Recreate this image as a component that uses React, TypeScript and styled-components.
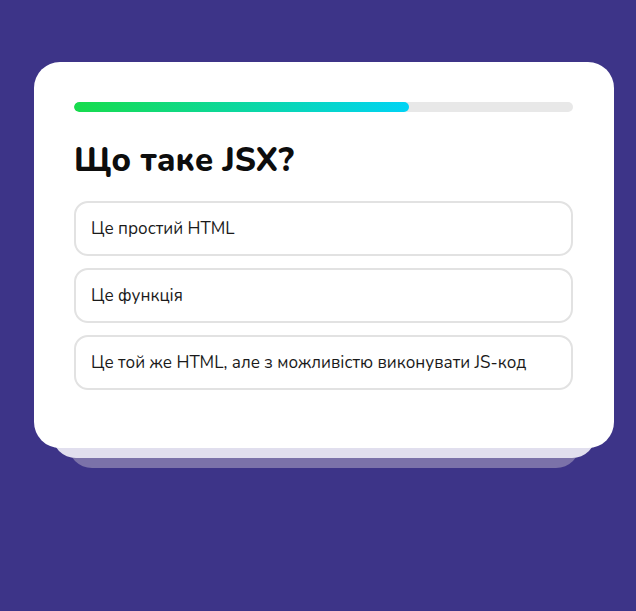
import React from "react";
import styled, { createGlobalStyle } from "styled-components";

const Global = createGlobalStyle`
  html, body { margin: 0; padding: 0; }
  body {
    background: #3d3488;
    font-family: "Nunito", "Lato", "Noto Sans", sans-serif;
    min-height: 611px;
  }
`;

const Page = styled.div`
  width: 636px;
  height: 611px;
  padding: 62px 0 0 34px;
  box-sizing: border-box;
`;

const Stack = styled.div`
  position: relative;
  width: 580px;
`;

const Layer = styled.div<{ $inset: number; $drop: number; $color: string }>`
  position: absolute;
  left: ${(p) => p.$inset}px;
  right: ${(p) => p.$inset}px;
  bottom: -${(p) => p.$drop}px;
  height: 80px;
  border-radius: 0 0 24px 24px;
  background: ${(p) => p.$color};
`;

const Card = styled.div`
  position: relative;
  background: #ffffff;
  border-radius: 26px;
  padding: 40px 41px 58px 40px;
  display: flex;
  flex-direction: column;
`;

const Track = styled.div`
  height: 10px;
  border-radius: 5px;
  background: #e8e8e8;
  overflow: hidden;
`;

const Fill = styled.div`
  height: 100%;
  border-radius: 5px;
  background: linear-gradient(90deg, #17dc4c 0%, #00d3f5 100%);
`;

const Title = styled.h1`
  margin: 29px 0 20px;
  font-size: 33px;
  line-height: 40px;
  font-weight: 800;
  color: #0d0d0d;
`;

const Options = styled.div`
  display: flex;
  flex-direction: column;
  gap: 12px;
`;

const Option = styled.button`
  height: 55px;
  box-sizing: border-box;
  border: 2px solid #e2e2e2;
  border-radius: 14px;
  background: #fff;
  padding: 0 15px;
  text-align: left;
  font-family: inherit;
  font-size: 17px;
  color: #1a1a1a;
`;

const answers = [
  "Це простий HTML",
  "Це функція",
  "Це той же HTML, але з можливістю виконувати JS-код",
];

export default function App() {
  return (
    <>
      <Global />
      <Page>
        <Stack>
          <Layer $inset={34} $drop={20} $color="#7b72a9" />
          <Layer $inset={18} $drop={10} $color="#e1dfee" />
          <Card>
            <Track>
              <Fill style={{ width: `${(335 / 499) * 100}%` }} />
            </Track>
            <Title>Що таке JSX?</Title>
            <Options>
              {answers.map((a) => (
                <Option key={a}>{a}</Option>
              ))}
            </Options>
          </Card>
        </Stack>
      </Page>
    </>
  );
}
